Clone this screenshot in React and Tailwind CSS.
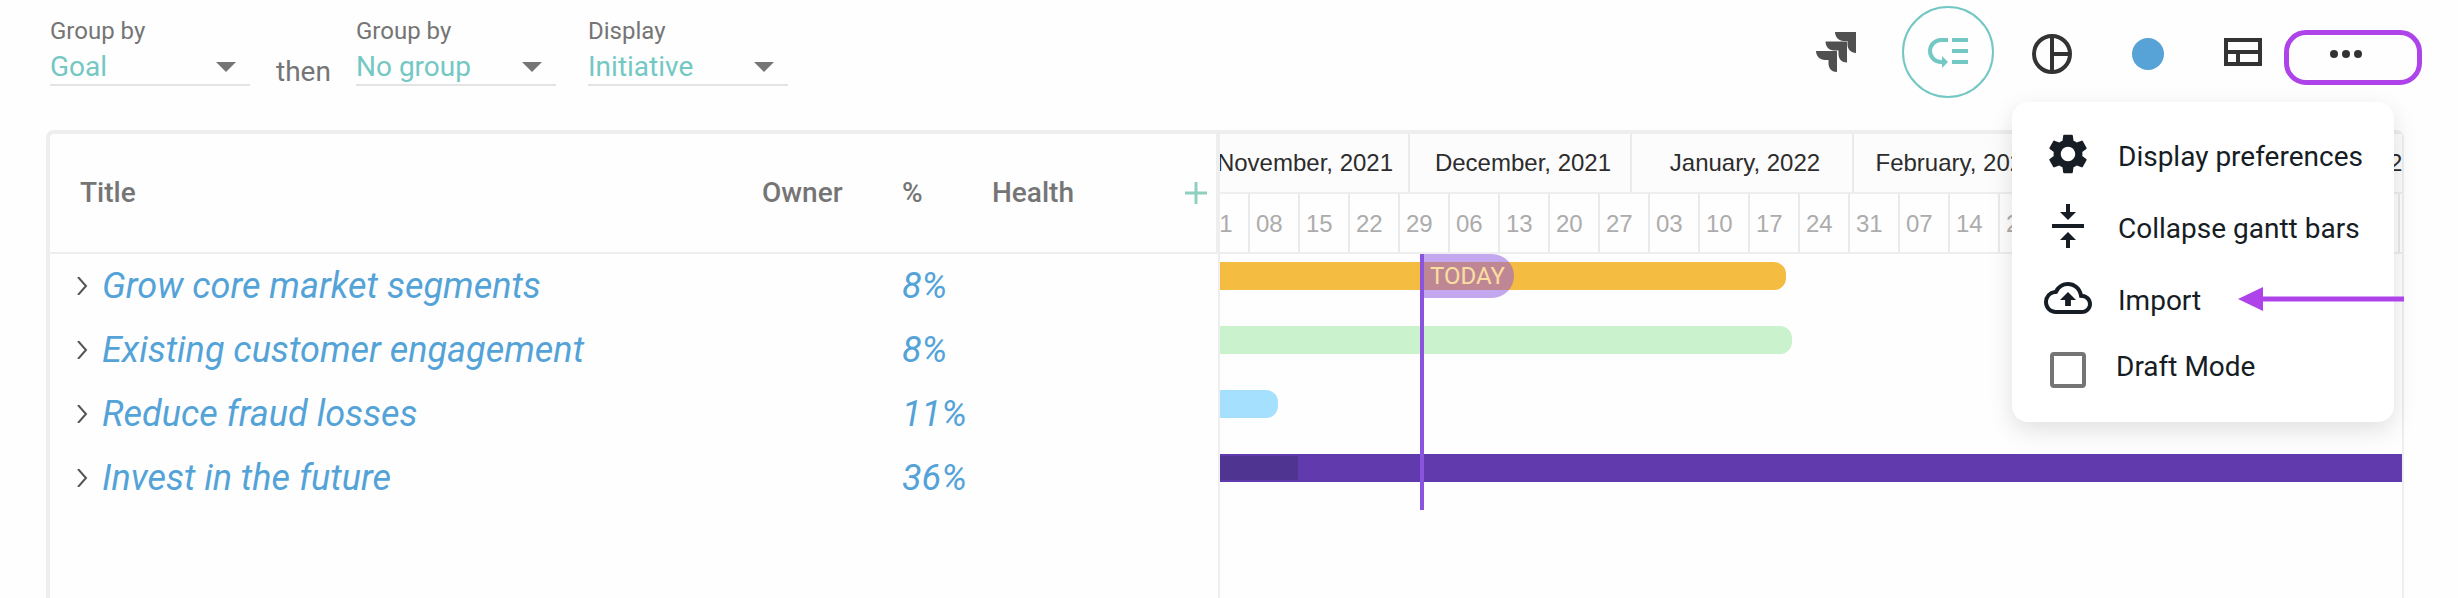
import { MdSettings, MdVerticalAlignCenter, MdOutlineBackup } from "react-icons/md";

const selects = [
  { id: "group-primary", label: "Group by", value: "Goal" },
  { id: "group-secondary", label: "Group by", value: "No group" },
  { id: "display-level", label: "Display", value: "Initiative" },
];

const goals = [
  { title: "Grow core market segments", percent: "8%", bar: "w-[566px] rounded-r-xl bg-[#f5bc42]" },
  { title: "Existing customer engagement", percent: "8%", bar: "w-[572px] rounded-r-xl bg-[#caf3cd]" },
  { title: "Reduce fraud losses", percent: "11%", bar: "w-[58px] rounded-r-xl bg-[#a5e1ff]" },
  { title: "Invest in the future", percent: "36%", bar: "w-full bg-[#613aae]", progress: true },
];

const months = [
  { name: "November, 2021", width: "w-[214px]" },
  { name: "December, 2021", width: "w-[222px]" },
  { name: "January, 2022", width: "w-[222px]" },
  { name: "February, 2022", width: "w-[200px]" },
  { name: "March, 2022", width: "w-[222px]" },
  { name: "April, 2022", width: "w-[214px]" },
];

const weeks = [
  "01", "08", "15", "22", "29", "06", "13", "20", "27", "03", "10", "17", "24",
  "31", "07", "14", "21", "28", "07", "14", "21", "28", "04", "11", "18",
];

function FilterSelect({ id, label, value }) {
  return (
    <div className="flex w-[200px] flex-col">
      <label htmlFor={id} className="text-2xl leading-7 text-[#757575]">{label}</label>
      <div className="flex h-[41px] items-center border-b-2 border-[#e4e4e4] pt-1">
        <select id={id} className="h-9 min-w-0 grow appearance-none bg-transparent text-[28px] leading-9 text-[#74c8c4] outline-none">
          <option>{value}</option>
        </select>
        <svg className="pointer-events-none mr-3.5 h-2.5 w-5 shrink-0 -ml-5 fill-[#757575]" viewBox="0 0 20 10"><path d="M0 0h20L10 10z" /></svg>
      </div>
    </div>
  );
}

function Toolbar() {
  return (
    <div className="flex items-center">
      <button aria-label="Jira" className="mr-[46px]">
        <svg className="size-10 fill-[#505050]" viewBox="0 0 40 40">
          <path d="M19 0h21v21c-5 0-8.500-4-8.500-8.500V9h-4C23 9 19 5 19 0z" />
          <path d="M9.500 9.500h21.500v21c-5 0-8.500-3.500-8.500-8.500v-3.500H18c-5 0-8.500-4-8.500-9z" />
          <path d="M0 19h21v21c-5 0-8.500-3.500-8.500-8.500V28H9c-5 0-9-4-9-9z" />
        </svg>
      </button>
      <button aria-label="Row order" className="mr-[38px] flex size-[92px] items-center justify-center rounded-full border-2 border-[#74c8c4]">
        <svg className="h-8 w-10 fill-[#74c8c4]" viewBox="0 -2 40 32">
          <path d="M24 0h16v4H24zM24 11h16v4H24zM24 22h16v4H24z" />
          <path d="M20 2H13A11 11 0 0 0 13 24H15" fill="none" stroke="#74c8c4" strokeWidth="4" />
          <path d="M14 18l6 6-6 6z" />
        </svg>
      </button>
      <button aria-label="Progress view" className="mr-[60px] mt-1">
        <svg className="size-10 fill-none stroke-[#333] stroke-4" viewBox="0 0 40 40">
          <circle cx="20" cy="20" r="18" /><path d="M20 2v36M20 20h18" />
        </svg>
      </button>
      <button aria-label="Color" className="mr-[60px] mt-1 size-8 rounded-full bg-[#57a2d6]" />
      <button aria-label="Layout" className="mr-[22px]">
        <svg className="h-7 w-[38px] fill-none stroke-[#333] stroke-4" viewBox="0 0 38 28">
          <path d="M2 2h34v24H2zM2 14h34M14 14v12" />
        </svg>
      </button>
      <button aria-label="More options" className="mt-[11px] flex h-[55px] w-[138px] items-center justify-center rounded-[22px] border-[5px] border-[#ae43ea]">
        <svg className="mb-2 mr-3.5 h-2 w-8 fill-[#333]" viewBox="0 0 32 8">
          <circle cx="4" cy="4" r="4" /><circle cx="16" cy="4" r="4" /><circle cx="28" cy="4" r="4" />
        </svg>
      </button>
    </div>
  );
}

function OptionsMenu() {
  return (
    <div role="menu" className="absolute right-16 top-[102px] h-80 w-[382px] rounded-2xl bg-white pl-8 pt-7 text-[28px] leading-9 text-[#161d24] shadow-[0_8px_24px_rgba(0,0,0,0.12)]">
      <button role="menuitem" className="flex h-[72px] items-start gap-[26px]">
        <MdSettings className="size-12" /><span className="pt-[9px]">Display preferences</span>
      </button>
      <button role="menuitem" className="flex h-[72px] items-start gap-[26px]">
        <MdVerticalAlignCenter className="size-12" /><span className="pt-[9px]">Collapse gantt bars</span>
      </button>
      <button role="menuitem" className="flex h-[72px] items-start gap-[26px]">
        <MdOutlineBackup className="size-12" /><span className="pt-[9px]">Import</span>
      </button>
      <label className="flex items-start gap-[30px] pl-1.5">
        <input type="checkbox" className="mt-1.5 size-9 appearance-none rounded-sm border-4 border-[#757575]" />
        <span className="pt-[3px]">Draft Mode</span>
      </label>
      <svg className="absolute -right-[10px] top-[185px] h-6 w-[166px] fill-[#ae43ea]" viewBox="0 0 166 24">
        <path d="M0 12L25 0v9.500h141v5H25V24z" />
      </svg>
    </div>
  );
}

function GoalTable() {
  return (
    <table className="w-[1168px] shrink-0 table-fixed border-separate border-spacing-0 self-start text-left">
      <thead>
        <tr className="h-[120px] text-[28px] text-[#757575]">
          <th className="w-[682px] border-b-2 border-[#eee] pl-[30px] font-medium">Title</th>
          <th className="w-[140px] border-b-2 border-[#eee] pl-[30px] font-medium">Owner</th>
          <th className="w-[90px] border-b-2 border-[#eee] pl-[30px] font-medium">%</th>
          <th className="border-b-2 border-[#eee] pl-[30px] font-medium">Health</th>
          <th className="w-[70px] border-b-2 border-r-2 border-[#eee]">
            <button aria-label="Add column" className="flex pl-[37px]">
              <svg className="size-[22px] stroke-[#8fcfc0] stroke-3" viewBox="0 0 22 22"><path d="M11 0v22M0 11h22" /></svg>
            </button>
          </th>
        </tr>
      </thead>
      <tbody>
        {goals.map((goal) => (
          <tr key={goal.title} className="h-16 text-4xl italic text-[#54a3d8]">
            <td colSpan={2} className="pl-[26px]">
              <div className="flex items-center gap-[14px]">
                <button aria-label={"Expand " + goal.title} className="flex">
                  <svg className="h-[18px] w-3 fill-none stroke-[#555] stroke-2" viewBox="0 0 12 18"><path d="M2 0l8 9-8 9" /></svg>
                </button>
                <a href="#goal">{goal.title}</a>
              </div>
            </td>
            <td colSpan={3} className="pl-[30px]">{goal.percent}</td>
          </tr>
        ))}
      </tbody>
    </table>
  );
}

function Timeline() {
  return (
    <div className="relative min-w-0 grow overflow-hidden border-l-2 border-[#eee]">
      <div className="border-b-2 border-[#eee] bg-[#fcfcfc] font-['Liberation_Sans',sans-serif] text-2xl">
        <div className="-ml-6 flex h-[58px] text-[#2c2c2c]">
          {months.map((month) => (
            <div key={month.name} className={"flex shrink-0 items-center justify-center border-r-2 border-[#eaeaea] pl-1.5 " + month.width}>{month.name}</div>
          ))}
        </div>
      </div>
      <div className="border-b-2 border-[#eee] font-['Liberation_Sans',sans-serif] text-2xl">
        <div className="-ml-5 flex h-[58px] text-[#acacac]">
          {weeks.map((week, index) => (
            <div key={index} className="flex w-[50px] shrink-0 items-center border-r-2 border-[#eaeaea] pl-1.5 pt-0.5">{week}</div>
          ))}
        </div>
      </div>
      <div className="relative">
        {goals.map((goal) => (
          <div key={goal.title} className="h-16 pt-2">
            <div className={"h-7 " + goal.bar}>
              {goal.progress && <div className="h-full w-[78px] border-y-2 border-[#613aae] bg-[#4f3492]" />}
            </div>
          </div>
        ))}
        <div className="absolute inset-y-0 left-[200px] flex items-start border-l-4 border-[#8a54dd]">
          <span className="flex h-11 w-[90px] items-center rounded-r-full bg-[#8a54e4] pl-1.5 text-2xl text-white opacity-50">TODAY</span>
        </div>
      </div>
    </div>
  );
}

export default function App() {
  return (
    <div className="relative flex min-h-screen flex-col overflow-hidden bg-[#fefefe] font-[Roboto,sans-serif]">
      <header className="flex h-[130px] items-start justify-between pl-[50px] pr-9">
        <div className="flex pt-[17px]">
          <FilterSelect {...selects[0]} />
          <span className="mx-[26px] w-[54px] pt-[34px] text-[28px] text-[#757575]">then</span>
          <FilterSelect {...selects[1]} />
          <div className="w-8" />
          <FilterSelect {...selects[2]} />
        </div>
        <div className="pt-1.5"><Toolbar /></div>
      </header>
      <main className="mr-[54px] ml-[46px] flex grow rounded-t-lg border-l-4 border-r-2 border-t-4 border-[#eee]">
        <GoalTable />
        <Timeline />
      </main>
      <OptionsMenu />
    </div>
  );
}
